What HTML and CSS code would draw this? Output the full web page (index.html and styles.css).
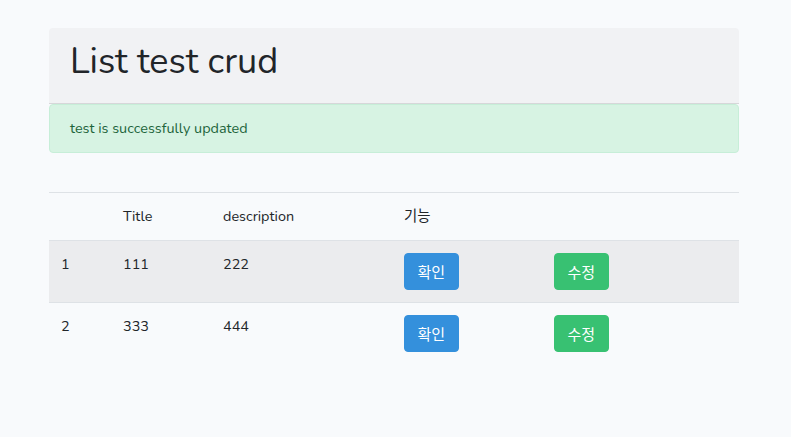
FILE: index.html
```html
<!DOCTYPE html>
<html lang="ko">
<head>
<meta charset="utf-8">
<title>List test crud</title>
<link rel="stylesheet" href="styles.css">
</head>
<body>
<div class="container">
  <div class="card">
    <div class="card-header">
      <h1 class="title">List test crud</h1>
    </div>
    <div class="alert">test is successfully updated</div>
  </div>
  <table class="table">
    <thead>
      <tr>
        <td class="c-id"></td>
        <td class="c-title">Title</td>
        <td class="c-desc">description</td>
        <td class="c-act">기능</td>
        <td class="c-edit"></td>
      </tr>
    </thead>
    <tbody>
      <tr class="striped">
        <td>1</td>
        <td>111</td>
        <td>222</td>
        <td><a class="btn btn-primary">확인</a></td>
        <td><a class="btn btn-success">수정</a></td>
      </tr>
      <tr>
        <td>2</td>
        <td>333</td>
        <td>444</td>
        <td><a class="btn btn-primary">확인</a></td>
        <td><a class="btn btn-success">수정</a></td>
      </tr>
    </tbody>
  </table>
</div>
</body>
</html>
```
FILE: styles.css
```css
html, body {
  margin: 0;
  padding: 0;
}
body {
  background: #f8fafc;
  color: #212529;
  font-family: "Nunito", "Lato", "Noto Sans CJK KR", sans-serif;
  font-size: 14.4px;
  line-height: 1.6;
}
.container {
  width: 690px;
  margin: 28px 0 0 49px;
}
.card {
  margin-bottom: 39px;
}
.card-header {
  background: #f1f2f4;
  border-bottom: 1px solid #d6d7d9;
  border-radius: 4px 4px 0 0;
  padding: 12px 21px;
}
.title {
  margin: 0 0 8px;
  font-size: 36px;
  font-weight: 400;
  line-height: 1.2;
  color: #212529;
}
.alert {
  background: #d7f3e3;
  border: 1px solid #c7eed8;
  border-radius: 4px;
  color: #1d643b;
  padding: 12px 20px;
  margin-top: 0;
}
.table {
  width: 100%;
  border-collapse: collapse;
}
.table td {
  padding: 12px;
  border-top: 1px solid #dee2e6;
  vertical-align: top;
  text-align: left;
}
.c-id { width: 38px; }
.c-title { width: 76px; }
.c-desc { width: 157px; }
.c-act { width: 126px; }
.striped {
  background: #ebecee;
}
.btn {
  display: inline-block;
  padding: 6px 12.5px;
  border: 1px solid transparent;
  border-radius: 4px;
  color: #fff;
  font-size: 15px;
  line-height: 23px;
  font-family: "Noto Sans CJK KR", sans-serif;
}
.btn-primary {
  background: #3490dc;
  border-color: #3490dc;
}
.btn-success {
  background: #38c172;
  border-color: #38c172;
}
```
